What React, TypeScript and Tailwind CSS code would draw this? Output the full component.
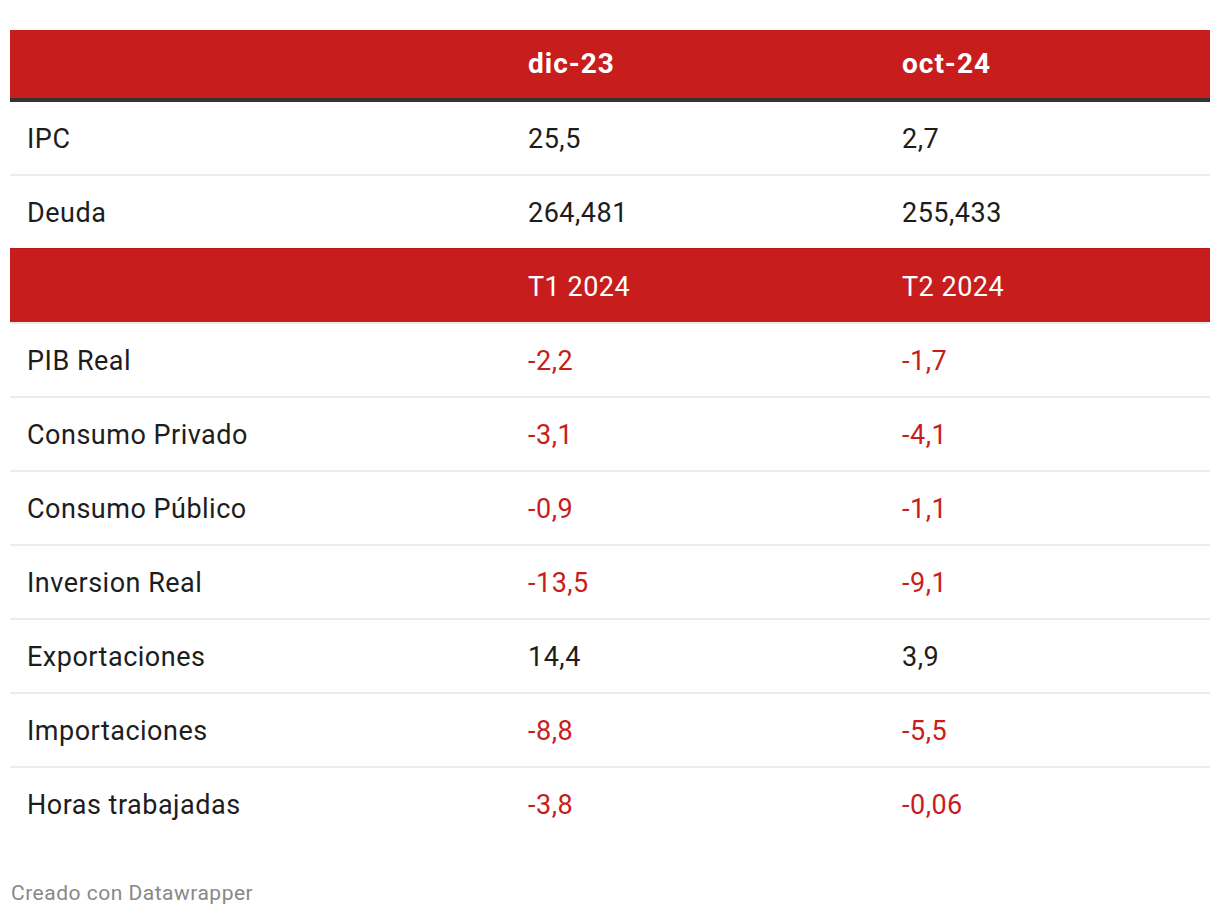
import React from "react";

type Row = { label: string; a: string; b: string };

const top: Row[] = [
  { label: "IPC", a: "25,5", b: "2,7" },
  { label: "Deuda", a: "264,481", b: "255,433" },
];

const bottom: Row[] = [
  { label: "PIB Real", a: "-2,2", b: "-1,7" },
  { label: "Consumo Privado", a: "-3,1", b: "-4,1" },
  { label: "Consumo Público", a: "-0,9", b: "-1,1" },
  { label: "Inversion Real", a: "-13,5", b: "-9,1" },
  { label: "Exportaciones", a: "14,4", b: "3,9" },
  { label: "Importaciones", a: "-8,8", b: "-5,5" },
  { label: "Horas trabajadas", a: "-3,8", b: "-0,06" },
];

const cls = (v: string) => (v.startsWith("-") ? "text-[#c71e1d]" : "text-[#1d1d1d]");

function DataRow({ r, last }: { r: Row; last?: boolean }) {
  return (
    <div
      className={`grid grid-cols-[501px_374px_325px] items-center ${
        last ? "h-[72px]" : "h-[74px] border-b-2 border-[#ececec]"
      }`}
    >
      <div className="pl-[17px] pt-[3px] text-[#1d1d1d]">{r.label}</div>
      <div className={`pl-[17px] pt-[3px] ${cls(r.a)}`}>{r.a}</div>
      <div className={`pl-[17px] pt-[3px] ${cls(r.b)}`}>{r.b}</div>
    </div>
  );
}

export default function App() {
  return (
    <div
      className="w-[1220px] h-[916px] bg-white pt-[30px] px-[10px]"
      style={{ fontFamily: "Roboto, 'Liberation Sans', sans-serif" }}
    >
      <div className="w-[1200px] text-[27px] leading-none tracking-[0.5px]">
        <div className="grid grid-cols-[501px_374px_325px] h-[72px] items-center bg-[#c71e1d] border-b-4 border-[#333333] text-white text-[28px] font-bold tracking-[1px]">
          <div className="pl-[17px]"></div>
          <div className="pl-[17px]">dic-23</div>
          <div className="pl-[17px]">oct-24</div>
        </div>
        <DataRow r={top[0]} />
        <DataRow r={top[1]} last />
        <div className="grid grid-cols-[501px_374px_325px] h-[76px] items-center bg-[#c71e1d] border-t border-t-[#b51a19] border-b-2 border-b-[#ececec] text-white">
          <div className="pl-[17px] pt-[3px]"></div>
          <div className="pl-[17px] pt-[3px]">T1 2024</div>
          <div className="pl-[17px] pt-[3px]">T2 2024</div>
        </div>
        {bottom.map((r, i) => (
          <DataRow key={r.label} r={r} last={i === bottom.length - 1} />
        ))}
      </div>
      <div className="mt-[43px] pl-[1px] text-[21px] leading-none tracking-[0.5px] text-[#888888]">
        Creado con Datawrapper
      </div>
    </div>
  );
}
